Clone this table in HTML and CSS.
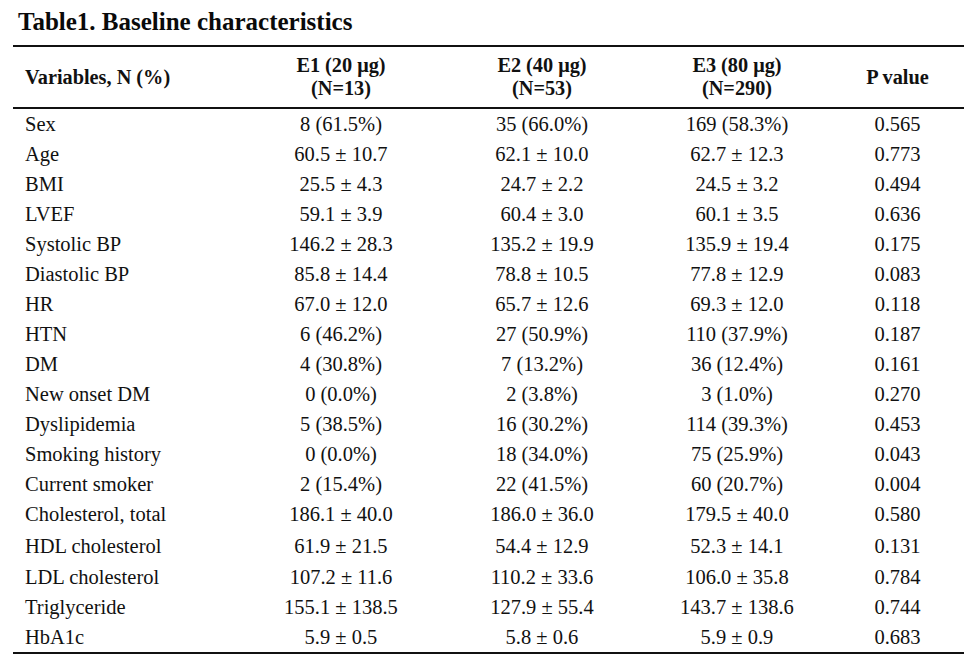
FILE: index.html
```html
<!DOCTYPE html>
<html lang="en">
<head>
<meta charset="utf-8">
<title>Table1. Baseline characteristics</title>
<link rel="stylesheet" href="styles.css">
</head>
<body>
<div class="page">
  <h1 class="title">Table1. Baseline characteristics</h1>
  <div class="table">
    <div class="row head">
      <div class="cell label">Variables, N (%)</div>
      <div class="cell">E1 (20 μg)<br>(N=13)</div>
      <div class="cell">E2 (40 μg)<br>(N=53)</div>
      <div class="cell">E3 (80 μg)<br>(N=290)</div>
      <div class="cell">P value</div>
    </div>
    <div class="body">
      <div class="row"><div class="cell label">Sex</div><div class="cell">8 (61.5%)</div><div class="cell">35 (66.0%)</div><div class="cell">169 (58.3%)</div><div class="cell">0.565</div></div>
      <div class="row"><div class="cell label">Age</div><div class="cell">60.5 ± 10.7</div><div class="cell">62.1 ± 10.0</div><div class="cell">62.7 ± 12.3</div><div class="cell">0.773</div></div>
      <div class="row"><div class="cell label">BMI</div><div class="cell">25.5 ± 4.3</div><div class="cell">24.7 ± 2.2</div><div class="cell">24.5 ± 3.2</div><div class="cell">0.494</div></div>
      <div class="row"><div class="cell label">LVEF</div><div class="cell">59.1 ± 3.9</div><div class="cell">60.4 ± 3.0</div><div class="cell">60.1 ± 3.5</div><div class="cell">0.636</div></div>
      <div class="row"><div class="cell label">Systolic BP</div><div class="cell">146.2 ± 28.3</div><div class="cell">135.2 ± 19.9</div><div class="cell">135.9 ± 19.4</div><div class="cell">0.175</div></div>
      <div class="row"><div class="cell label">Diastolic BP</div><div class="cell">85.8 ± 14.4</div><div class="cell">78.8 ± 10.5</div><div class="cell">77.8 ± 12.9</div><div class="cell">0.083</div></div>
      <div class="row"><div class="cell label">HR</div><div class="cell">67.0 ± 12.0</div><div class="cell">65.7 ± 12.6</div><div class="cell">69.3 ± 12.0</div><div class="cell">0.118</div></div>
      <div class="row"><div class="cell label">HTN</div><div class="cell">6 (46.2%)</div><div class="cell">27 (50.9%)</div><div class="cell">110 (37.9%)</div><div class="cell">0.187</div></div>
      <div class="row"><div class="cell label">DM</div><div class="cell">4 (30.8%)</div><div class="cell">7 (13.2%)</div><div class="cell">36 (12.4%)</div><div class="cell">0.161</div></div>
      <div class="row"><div class="cell label">New onset DM</div><div class="cell">0 (0.0%)</div><div class="cell">2 (3.8%)</div><div class="cell">3 (1.0%)</div><div class="cell">0.270</div></div>
      <div class="row"><div class="cell label">Dyslipidemia</div><div class="cell">5 (38.5%)</div><div class="cell">16 (30.2%)</div><div class="cell">114 (39.3%)</div><div class="cell">0.453</div></div>
      <div class="row"><div class="cell label">Smoking history</div><div class="cell">0 (0.0%)</div><div class="cell">18 (34.0%)</div><div class="cell">75 (25.9%)</div><div class="cell">0.043</div></div>
      <div class="row"><div class="cell label">Current smoker</div><div class="cell">2 (15.4%)</div><div class="cell">22 (41.5%)</div><div class="cell">60 (20.7%)</div><div class="cell">0.004</div></div>
      <div class="row tall"><div class="cell label">Cholesterol, total</div><div class="cell">186.1 ± 40.0</div><div class="cell">186.0 ± 36.0</div><div class="cell">179.5 ± 40.0</div><div class="cell">0.580</div></div>
      <div class="row tall"><div class="cell label">HDL cholesterol</div><div class="cell">61.9 ± 21.5</div><div class="cell">54.4 ± 12.9</div><div class="cell">52.3 ± 14.1</div><div class="cell">0.131</div></div>
      <div class="row"><div class="cell label">LDL cholesterol</div><div class="cell">107.2 ± 11.6</div><div class="cell">110.2 ± 33.6</div><div class="cell">106.0 ± 35.8</div><div class="cell">0.784</div></div>
      <div class="row"><div class="cell label">Triglyceride</div><div class="cell">155.1 ± 138.5</div><div class="cell">127.9 ± 55.4</div><div class="cell">143.7 ± 138.6</div><div class="cell">0.744</div></div>
      <div class="row"><div class="cell label">HbA1c</div><div class="cell">5.9 ± 0.5</div><div class="cell">5.8 ± 0.6</div><div class="cell">5.9 ± 0.9</div><div class="cell">0.683</div></div>
    </div>
  </div>
</div>
</body>
</html>
```

FILE: styles.css
```css
html, body {
  margin: 0;
  padding: 0;
  background: #ffffff;
}

body {
  font-family: "Liberation Serif", "Times New Roman", serif;
  color: #111111;
}

.page {
  padding: 7px 0 0 13px;
  width: 951px;
}

.title {
  margin: 0 0 0 5px;
  font-size: 25px;
  font-weight: bold;
  line-height: 30px;
  color: #0a0a0a;
}

.table {
  margin-top: 8px;
  border-top: 2px solid #111111;
  border-bottom: 2px solid #111111;
}

.row {
  display: grid;
  grid-template-columns: 227px 202px 200px 190px 131px;
  align-items: center;
  height: 30px;
  font-size: 20.5px;
}

.row.tall {
  height: 31.5px;
}

.row.head {
  height: 60px;
  font-weight: bold;
  line-height: 23px;
  font-size: 20.3px;
  border-bottom: 2px solid #111111;
}

.cell {
  text-align: center;
  white-space: nowrap;
}

.cell.label {
  text-align: left;
  padding-left: 12px;
}
```
